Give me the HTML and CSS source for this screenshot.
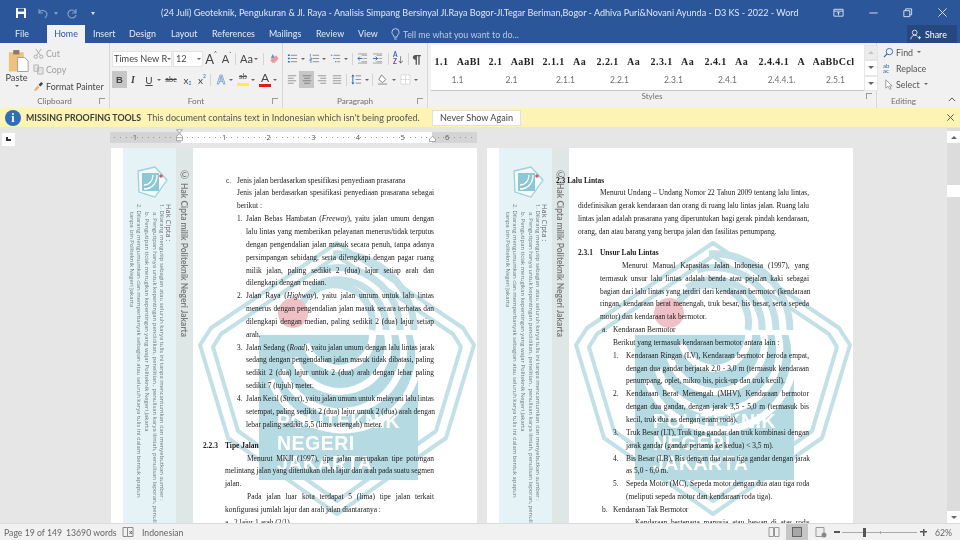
FILE: index.html
```html
<!DOCTYPE html>
<html lang="en">
<head>
<meta charset="utf-8">
<title>Word</title>
<link rel="stylesheet" href="styles.css">
</head>
<body>
<svg class="defs" aria-hidden="true">
  <defs>
    <clipPath id="rectclip"><rect x="148" y="187" width="159" height="145"/></clipPath>
    <symbol id="wm" viewBox="0 0 366 375">
      <g fill="none" stroke="#c2e0e6" stroke-linejoin="round">
        <path stroke-width="4" d="M226 95 L352 180 L363 197 L335 290 L226 366 L117 290 L89 197 L100 180 Z"/>
        <path stroke-width="4" d="M226 108 L342 186 L350 199 L325 283 L226 353 L127 283 L102 199 L110 186 Z"/>
        <g stroke-width="7">
          <path d="M200 140 A48 48 0 0 1 275 182"/>
          <path d="M210 122 A62 62 0 0 1 289 182"/>
          <path d="M222 106 A76 76 0 0 1 303 182"/>
          <path d="M186 168 A34 34 0 0 1 261 182"/>
        </g>
      </g>
      <rect x="148" y="187" width="159" height="145" fill="#b5dae2"/>
      <g clip-path="url(#rectclip)" fill="none" stroke="#fff" stroke-width="7">
        <path d="M261 180 A34 34 0 0 1 195 196"/>
        <path d="M275 180 A48 48 0 0 1 183 210"/>
        <path d="M289 180 A62 62 0 0 1 171 222"/>
        <path d="M303 180 A76 76 0 0 1 160 232"/>
      </g>
      <circle cx="182" cy="165" r="15" fill="#efc1c6"/>
      <text class="wm-t" x="166" y="280">POLITEKNIK</text>
      <text class="wm-t" x="166" y="302">NEGERI</text>
      <text class="wm-t" x="166" y="322">JAKARTA</text>
    </symbol>
    <symbol id="lines-l" viewBox="0 0 12 12"><path d="M1 1.5H11M1 4.5H8M1 7.5H11M1 10.5H8" stroke="#8a8a8a" fill="none"/></symbol>
    <symbol id="lines-c" viewBox="0 0 12 12"><path d="M1 1.5H11M2.500 4.500H9.500M1 7.500H11M2.500 10.500H9.500" stroke="#777" fill="none"/></symbol>
    <symbol id="lines-r" viewBox="0 0 12 12"><path d="M1 1.5H11M4 4.500H11M1 7.500H11M4 10.500H11" stroke="#8a8a8a" fill="none"/></symbol>
    <symbol id="lines-j" viewBox="0 0 12 12"><path d="M1 1.5H11M1 4.500H11M1 7.500H11M1 10.500H11" stroke="#8a8a8a" fill="none"/></symbol>
  </defs>
</svg>

<div class="app">
  <header class="titlebar">
    <div class="qat">
      <svg class="qi" viewBox="0 0 12 12"><path d="M1 1H10L11 2V11H1Z" fill="#fff"/><rect x="3" y="1.500" width="6" height="3" fill="#2b579a"/><rect x="3" y="7" width="6" height="4" fill="#2b579a"/></svg>
      <svg class="qi dim" viewBox="0 0 12 12"><path d="M2 2V6H6M2 6C4 2 9 3 10 7C10 9 9 10 8 11" fill="none" stroke="#7f9bc8" stroke-width="1.200"/></svg>
      <span class="qcaret dimc"></span>
      <svg class="qi dim" viewBox="0 0 12 12"><path d="M10 2V6H6M10 6C8 2 3 2 2 6C1.500 9 4 11 6 11C8 11 9.500 10 10 8" fill="none" stroke="#7f9bc8" stroke-width="1.200"/></svg>
      <span class="qcaret"></span>
    </div>
    <div class="doc-title">(24 Juli) Geoteknik, Pengukuran &amp; Jl. Raya - Analisis Simpang Bersinyal Jl.Raya Bogor-Jl.Tegar Beriman,Bogor - Adhiva Puri&amp;Novani Ayunda - D3 KS - 2022 - Word</div>
    <div class="winbtns">
      <svg class="wi" viewBox="0 0 12 12"><path d="M1 2.500H11V10H1ZM1 4.500H11M6 5.500V9M4.500 7L6 5.500 7.500 7" fill="none" stroke="#dbe4f2"/></svg>
      <svg class="wi" viewBox="0 0 12 12"><path d="M1.500 6.500H10.500" stroke="#dbe4f2"/></svg>
      <svg class="wi" viewBox="0 0 12 12"><path d="M2 4H8.500V10.500H2ZM4 4V2H10.500V8.500H8.500" fill="none" stroke="#dbe4f2"/></svg>
      <svg class="wi" viewBox="0 0 12 12"><path d="M1.500 1.500L10.500 10.500M10.500 1.500L1.500 10.500" stroke="#dbe4f2"/></svg>
    </div>
  </header>

  <nav class="tabs">
    <span class="tab t-file">File</span>
    <span class="tab t-home">Home</span>
    <span class="tab t-insert">Insert</span>
    <span class="tab t-design">Design</span>
    <span class="tab t-layout">Layout</span>
    <span class="tab t-refs">References</span>
    <span class="tab t-mail">Mailings</span>
    <span class="tab t-review">Review</span>
    <span class="tab t-view">View</span>
    <svg class="bulb" viewBox="0 0 10 14"><path d="M3.500 10C3.500 8 1 7 1 4.500A4 4 0 0 1 9 4.500C9 7 6.500 8 6.500 10ZM3.500 12H6.500" fill="none" stroke="#c8d5ea"/></svg>
    <span class="tell">Tell me what you want to do...</span>
    <span class="share">
      <svg class="share-i" viewBox="0 0 14 14"><circle cx="6" cy="4.500" r="3" fill="none" stroke="#fff"/><path d="M1 13C1.500 9.500 3.500 8 6 8C7.500 8 8.500 8.500 9.500 9.500M10 11H14M12 9V13" fill="none" stroke="#fff"/></svg>
      Share
    </span>
  </nav>

  <section class="ribbon">
    <div class="grp g-clip">
      <div class="grp-body clip-body">
        <div class="paste">
          <svg class="paste-i" viewBox="0 0 24 26"><rect x="1" y="3" width="17" height="22" fill="#eec17e"/><rect x="6" y="0.500" width="7" height="5" fill="#8a7a66"/><path d="M11 9H19L23 13V25H11Z" fill="#fff" stroke="#999"/></svg>
          <span class="paste-l">Paste</span>
          <span class="caret c-paste"></span>
        </div>
        <div class="clip-list">
          <div class="clip-row off">
            <svg class="ci" viewBox="0 0 12 12"><path d="M3 1L8 8M9 1L4 8" stroke="#a8a8a8" fill="none"/><circle cx="3" cy="9.500" r="1.800" fill="none" stroke="#a8a8a8"/><circle cx="9" cy="9.500" r="1.800" fill="none" stroke="#a8a8a8"/></svg>Cut</div>
          <div class="clip-row off">
            <svg class="ci" viewBox="0 0 12 12"><path d="M1 1H6V8H1ZM5 4H11V11H5Z" fill="#e4e4e4" stroke="#b5b5b5"/></svg>Copy</div>
          <div class="clip-row">
            <svg class="ci" viewBox="0 0 12 12"><path d="M1 10L5 5L7 7L3 11Z" fill="#e5b35f"/><path d="M6 4L9 1L11 3L8 6Z" fill="#444"/></svg>Format Painter</div>
        </div>
      </div>
      <div class="grp-label">Clipboard<span class="launch"></span></div>
    </div>

    <div class="grp g-font">
      <div class="grp-body rows">
        <div class="row">
          <span class="sel s-font">Times New R<span class="caret"></span></span>
          <span class="sel s-size ml1">12<span class="caret"></span></span>
          <span class="gl g-a1 ml3">A<sup>^</sup></span>
          <span class="gl g-a2 ml6">A<sup>ˇ</sup></span>
          <span class="sep ml4"></span>
          <span class="gl g-aa ml4">Aa</span><span class="caret ml1"></span>
          <span class="sep ml5"></span>
          <svg class="ti ml4" viewBox="0 0 12 12"><path d="M5 1L3 6H8Z" fill="#6d8fc4"/><path d="M5 6L9 2.500L11.500 6L7.500 10.500H4.500L2.500 8Z" fill="#e89aa4"/></svg>
        </div>
        <div class="row">
          <span class="gl g-b">B</span>
          <span class="gl g-i">I</span>
          <span class="gl g-u ml5">U</span><span class="caret ml3"></span>
          <span class="gl g-abc ml4">abc</span>
          <span class="gl g-x ml6">x<sub>2</sub></span>
          <span class="gl g-x ml5">x<sup>2</sup></span>
          <span class="sep ml3"></span>
          <span class="gl g-ao ml5">A</span><span class="caret ml3"></span>
          <span class="hl ml4"><span class="hl-t">ab</span><span class="hl-y"></span></span><span class="caret ml2"></span>
          <span class="fc ml4"><span class="fc-t">A</span><span class="fc-r"></span></span><span class="caret ml2"></span>
        </div>
      </div>
      <div class="grp-label">Font<span class="launch"></span></div>
    </div>

    <div class="grp g-para">
      <div class="grp-body rows">
        <div class="row">
          <svg class="ti" viewBox="0 0 12 12"><path d="M4 2.500H11M4 6H11M4 9.500H11" stroke="#8a8a8a"/><path d="M1 2.500H3M1 6H3M1 9.500H3" stroke="#2b6cb0" stroke-width="1.500"/></svg><span class="caret ml3"></span>
          <svg class="ti ml4" viewBox="0 0 12 12"><path d="M4 2.500H11M4 6H11M4 9.500H11" stroke="#8a8a8a"/><path d="M1.500 1V4M1 5.500H3V7H1V8.500H3M1 10H3" stroke="#2b6cb0" stroke-width=".7" fill="none"/></svg><span class="caret ml2"></span>
          <svg class="ti ml4" viewBox="0 0 12 12"><path d="M4 2.500H11M6 6H11M8 9.500H11" stroke="#8a8a8a"/><path d="M1 2.500H2.500M3.500 6H5M5.500 9.500H7" stroke="#2b6cb0"/></svg><span class="caret ml3"></span>
          <span class="sep ml4"></span>
          <svg class="ti ml4" viewBox="0 0 12 12"><path d="M5 2.500H11M7 6H11M5 9.500H11M1 1H11M1 11H11" stroke="#8a8a8a" stroke-width=".8"/><path d="M1 6H6M1 6L3 4M1 6L3 8" stroke="#2b6cb0" fill="none"/></svg>
          <svg class="ti ml4" viewBox="0 0 12 12"><path d="M5 2.500H11M7 6H11M5 9.500H11M1 1H11M1 11H11" stroke="#8a8a8a" stroke-width=".8"/><path d="M1 6H6M6 6L4 4M6 6L4 8" stroke="#2b6cb0" fill="none"/></svg>
          <span class="sep ml5"></span>
          <span class="sort ml4"><span class="az"><b class="az-a">A</b><b class="az-z">Z</b></span><span class="az-arrow">↓</span></span>
          <span class="sep ml5"></span>
          <span class="gl g-pil ml4">¶</span>
        </div>
        <div class="row">
          <svg class="ali"><use href="#lines-l"/></svg>
          <span class="ali-on ml2"><svg class="ali"><use href="#lines-c"/></svg></span>
          <svg class="ali ml3"><use href="#lines-r"/></svg>
          <svg class="ali ml5"><use href="#lines-j"/></svg>
          <span class="sep ml4"></span>
          <svg class="ti ml4" viewBox="0 0 12 12"><path d="M5 2H11M5 6H11M5 10H11" stroke="#8a8a8a"/><path d="M2 1V11M1 3L2 1L3 3M1 9L2 11L3 9" stroke="#2b6cb0" fill="none"/></svg><span class="caret ml3"></span>
          <span class="sep ml3"></span>
          <svg class="ti ml4" viewBox="0 0 12 12"><path d="M5 1L9.500 6L6 9.500L2 6Z" fill="#fff" stroke="#777"/><path d="M1 11H11" stroke="#aaa" stroke-width="1.500"/></svg><span class="caret ml4"></span>
          <svg class="ti ml4" viewBox="0 0 12 12"><path d="M1 1H11V11H1ZM6 1V11M1 6H11" fill="#fff" stroke="#bbb" stroke-dasharray="1 1"/></svg><span class="caret ml3"></span>
        </div>
      </div>
      <div class="grp-label">Paragraph<span class="launch"></span></div>
    </div>

    <div class="grp g-styles">
      <div class="grp-body styles-body">
        <div class="gallery">
          <div class="style"><div class="s-prev">1.1&nbsp; AaBl</div><div class="s-name">1.1</div></div>
          <div class="style"><div class="s-prev">2.1&nbsp; AaBl</div><div class="s-name">2.1</div></div>
          <div class="style"><div class="s-prev">2.1.1&nbsp; Aa</div><div class="s-name">2.1.1</div></div>
          <div class="style"><div class="s-prev">2.2.1&nbsp; Aa</div><div class="s-name">2.2.1</div></div>
          <div class="style"><div class="s-prev">2.3.1&nbsp; Aa</div><div class="s-name">2.3.1</div></div>
          <div class="style"><div class="s-prev">2.4.1&nbsp; Aa</div><div class="s-name">2.4.1</div></div>
          <div class="style"><div class="s-prev">2.4.4.1&nbsp; A</div><div class="s-name">2.4.4.1.</div></div>
          <div class="style"><div class="s-prev">AaBbCcl</div><div class="s-name">2.5.1</div></div>
        </div>
        <div class="gal-scroll">
          <span class="gs"><i class="up off"></i></span>
          <span class="gs"><i class="down"></i></span>
          <span class="gs"><i class="down"></i></span>
        </div>
      </div>
      <div class="grp-label">Styles<span class="launch"></span></div>
    </div>

    <div class="grp g-edit">
      <div class="grp-body edit-list">
        <div class="edit-row"><svg class="ci" viewBox="0 0 12 12"><circle cx="7" cy="5" r="3.500" fill="none" stroke="#2b6cb0"/><path d="M4.500 7.500L1 11" stroke="#2b6cb0" stroke-width="1.300"/></svg>Find<span class="caret"></span></div>
        <div class="edit-row"><span class="abac">ab<br>ac</span>Replace</div>
        <div class="edit-row"><svg class="ci" viewBox="0 0 12 12"><path d="M3 1V10L5.500 8L7.500 11.500L9 10.500L7 7.500H10Z" fill="#fff" stroke="#999"/></svg>Select<span class="caret"></span></div>
      </div>
      <div class="grp-label">Editing</div>
    </div>
    <div class="collapse"><svg class="chev" viewBox="0 0 10 6"><path d="M1 5L5 1L9 5" fill="none" stroke="#555" stroke-width="1.200"/></svg></div>
  </section>

  <div class="msgbar">
    <span class="info">i</span>
    <strong class="msg-h">MISSING PROOFING TOOLS</strong>
    <span class="msg-t">This document contains text in Indonesian which isn't being proofed.</span>
    <span class="msg-btn">Never Show Again</span>
    <svg class="msg-x" viewBox="0 0 10 10"><path d="M1.500 1.500L8.500 8.500M8.500 1.500L1.500 8.500" stroke="#555" stroke-width="1.100"/></svg>
  </div>

  <main class="workspace">
    <div class="canvas">
      <div class="ruler-row">
        <span class="tabstop"><i></i></span>
        <div class="ruler">
          <span>1</span><span class="r0"></span><span>1</span><span>2</span><span>3</span><span>4</span><span>5</span><span>6</span>
          <svg class="mk mk-l" viewBox="0 0 8 14"><path d="M.5.500H7.500L4 4ZM4 5L7.500 8V13H.5V8ZM.5 9.500H7.500" fill="#fff" stroke="#999"/></svg>
          <svg class="mk mk-r" viewBox="0 0 8 7"><path d="M4 .5L7.500 3.500V6.500H.5V3.500Z" fill="#fff" stroke="#999"/></svg>
        </div>
      </div>
      <div class="pages">
        <article class="page">
          <svg class="wm"><use href="#wm"/></svg>
          <aside class="band">
            <svg class="logo" viewBox="0 0 32 32"><path d="M2 5L19 1L31 14L19 31L3 26Z" fill="#f2fafb" stroke="#9fd0da" stroke-width="1.300"/><rect x="6" y="7" width="17" height="18" fill="#8cc8d3"/><path d="M8 23C16 23 21 17 21 9M8 19C13 19 17 15 17 9" fill="none" stroke="#fff" stroke-width="1.300"/><circle cx="25" cy="10" r="1.800" fill="#dd5566"/></svg>
            <div class="notes">
              <div class="n n-h">Hak Cipta :</div>
              <div class="n">1. Dilarang mengutip sebagian atau seluruh karya tulis ini tanpa mencantumkan dan menyebutkan sumber :</div>
              <div class="n n-s">a. Pengutipan hanya untuk kepentingan pendidikan, penelitian , penulisan karya ilmiah, penulisan laporan, penulisan kritik atau tinjauan suatu masalah.</div>
              <div class="n n-s n-g">b. Pengutipan tidak merugikan kepentingan yang wajar Politeknik Negeri Jakarta</div>
              <div class="n n-g">2. Dilarang mengumumkan dan memperbanyak sebagian atau seluruh karya tulis ini dalam bentuk apapun</div>
              <div class="n n-s">tanpa izin Politeknik Negeri Jakarta</div>
            </div>
          </aside>
          <aside class="band2"><span class="copy"><span class="cc">©</span> Hak Cipta milik Politeknik Negeri Jakarta</span></aside>
          <div class="doc doc-l">
            <div class="ln item i1"><span class="lbl w11">c.</span><span class="tx">Jenis jalan berdasarkan spesifikasi penyediaan prasarana</span></div>
            <div class="ln j p12">Jenis jalan berdasarkan spesifikasi penyediaan prasarana sebagai</div>
            <div class="ln p12">berikut :</div>
            <div class="ln j item p12"><span class="lbl w9">1.</span><span class="tx">Jalan Bebas Hambatan (<em>Freeway</em>), yaitu jalan umum dengan</span></div>
            <div class="ln j p21">lalu lintas yang memberikan pelayanan menerus/tidak terputus</div>
            <div class="ln j p21">dengan pengendalian jalan masuk secara penuh, tanpa adanya</div>
            <div class="ln j p21">persimpangan sebidang, serta dilengkapi dengan pagar ruang</div>
            <div class="ln j p21">milik jalan, paling sedikit 2 (dua) lajur setiap arah dan</div>
            <div class="ln p21">dilengkapi dengan median.</div>
            <div class="ln j item p12"><span class="lbl w9">2.</span><span class="tx">Jalan Raya (<em>Highway</em>), yaitu jalan umum untuk lalu lintas</span></div>
            <div class="ln j p21">menerus dengan pengendalian jalan masuk secara terbatas dan</div>
            <div class="ln j p21">dilengkapi dengan median, paling sedikit 2 (dua) lajur setiap</div>
            <div class="ln p21">arah.</div>
            <div class="ln j item p12"><span class="lbl w9">3.</span><span class="tx">Jalan Sedang (<em>Road</em>), yaitu jalan umum dengan lalu lintas jarak</span></div>
            <div class="ln j p21">sedang dengan pengendalian jalan masuk tidak dibatasi, paling</div>
            <div class="ln j p21">sedikit 2 (dua) lajur untuk 2 (dua) arah dengan lebar paling</div>
            <div class="ln p21">sedikit 7 (tujuh) meter.</div>
            <div class="ln j item p12 tight"><span class="lbl w9">4.</span><span class="tx">Jalan Kecil (<em>Street</em>), yaitu jalan umum untuk melayani lalu lintas</span></div>
            <div class="ln j p21">setempat, paling sedikit 2 (dua) lajur untuk 2 (dua) arah dengan</div>
            <div class="ln p21">lebar paling sedikit 5,5 (lima setengah) meter.</div>
            <div class="ln item hd hang"><span class="lbl w22">2.2.3</span><span class="tx">Tipe Jalan</span></div>
            <div class="ln j p22">Menurut MKJI (1997), tipe jalan merupakan tipe potongan</div>
            <div class="ln j tight">melintang jalan yang ditentukan oleh lajur dan arah pada suatu segmen</div>
            <div class="ln">jalan.</div>
            <div class="ln j p22">Pada jalan luar kota terdapat 5 (lima) tipe jalan terkait</div>
            <div class="ln">konfigurasi jumlah lajur dan arah jalan diantaranya :</div>
            <div class="ln item"><span class="lbl w9">a.</span><span class="tx">2 lajur 1 arah (2/1)</span></div>
          </div>
        </article>

        <article class="page">
          <svg class="wm"><use href="#wm"/></svg>
          <aside class="band">
            <svg class="logo" viewBox="0 0 32 32"><path d="M2 5L19 1L31 14L19 31L3 26Z" fill="#f2fafb" stroke="#9fd0da" stroke-width="1.300"/><rect x="6" y="7" width="17" height="18" fill="#8cc8d3"/><path d="M8 23C16 23 21 17 21 9M8 19C13 19 17 15 17 9" fill="none" stroke="#fff" stroke-width="1.300"/><circle cx="25" cy="10" r="1.800" fill="#dd5566"/></svg>
            <div class="notes">
              <div class="n n-h">Hak Cipta :</div>
              <div class="n">1. Dilarang mengutip sebagian atau seluruh karya tulis ini tanpa mencantumkan dan menyebutkan sumber :</div>
              <div class="n n-s">a. Pengutipan hanya untuk kepentingan pendidikan, penelitian , penulisan karya ilmiah, penulisan laporan, penulisan kritik atau tinjauan suatu masalah.</div>
              <div class="n n-s n-g">b. Pengutipan tidak merugikan kepentingan yang wajar Politeknik Negeri Jakarta</div>
              <div class="n n-g">2. Dilarang mengumumkan dan memperbanyak sebagian atau seluruh karya tulis ini dalam bentuk apapun</div>
              <div class="n n-s">tanpa izin Politeknik Negeri Jakarta</div>
            </div>
          </aside>
          <aside class="band2"><span class="copy"><span class="cc">©</span> Hak Cipta milik Politeknik Negeri Jakarta</span></aside>
          <div class="doc doc-r">
            <div class="ln hd hang">2.3 Lalu Lintas</div>
            <div class="ln j p22">Menurut Undang – Undang Nomor 22 Tahun 2009 tentang lalu lintas,</div>
            <div class="ln j">didefinisikan gerak kendaraan dan orang di ruang lalu lintas jalan. Ruang lalu</div>
            <div class="ln j">lintas jalan adalah prasarana yang diperuntukan bagi gerak pindah kendaraan,</div>
            <div class="ln">orang, dan atau barang yang berupa jalan dan fasilitas penumpang.</div>
            <div class="ln item hd"><span class="lbl w22">2.3.1</span><span class="tx">Unsur Lalu Lintas</span></div>
            <div class="ln j p22 in22">Menurut Manual Kapasitas Jalan Indonesia (1997), yang</div>
            <div class="ln j p22">termasuk unsur lalu lintas adalah benda atau pejalan kaki sebagai</div>
            <div class="ln j p22">bagian dari lalu lintas yang terdiri dari kendaraan bermotor (kendaraan</div>
            <div class="ln j p22">ringan, kendaraan berat menengah, truk besar, bis besar, serta sepeda</div>
            <div class="ln p22">motor) dan kendaraan tak bermotor.</div>
            <div class="ln item p24"><span class="lbl w11">a.</span><span class="tx">Kendaraan Bermotor</span></div>
            <div class="ln p35">Berikut yang termasuk kendaraan bermotor antara lain :</div>
            <div class="ln j item p35"><span class="lbl w13">1.</span><span class="tx">Kendaraan Ringan (LV), Kendaraan bermotor beroda empat,</span></div>
            <div class="ln j p48">dengan dua gandar berjarak 2,0 - 3,0 m (termasuk kendaraan</div>
            <div class="ln p48">penumpang, oplet, mikro bis, pick-up dan truk kecil).</div>
            <div class="ln j item p35"><span class="lbl w13">2.</span><span class="tx">Kendaraan Berat Menengah (MHV), Kendaraan bermotor</span></div>
            <div class="ln j p48">dengan dua gandar, dengan jarak 3,5 - 5,0 m (termasuk bis</div>
            <div class="ln p48">kecil, truk dua as dengan enam roda).</div>
            <div class="ln j item p35 tight"><span class="lbl w13">3.</span><span class="tx">Truk Besar (LT), Truk tiga gandar dan truk kombinasi dengan</span></div>
            <div class="ln p48">jarak gandar (gandar pertama ke kedua) &lt; 3,5 m).</div>
            <div class="ln j item p35"><span class="lbl w13">4.</span><span class="tx">Bis Besar (LB), Bis dengan dua atau tiga gandar dengan jarak</span></div>
            <div class="ln p48">as 5,0 - 6,0 m.</div>
            <div class="ln j item p35"><span class="lbl w13">5.</span><span class="tx">Sepeda Motor (MC), Sepeda motor dengan dua atau tiga roda</span></div>
            <div class="ln p48">(meliputi sepeda motor dan kendaraan roda tiga).</div>
            <div class="ln item p24"><span class="lbl w11">b.</span><span class="tx">Kendaraan Tak Bermotor</span></div>
            <div class="ln j p57">Kendaraan bertenaga manusia atau hewan di atas roda</div>
          </div>
        </article>
      </div>
    </div>
    <div class="vscroll">
      <span class="vbtn"><i class="up"></i></span>
      <span class="thumb"></span>
      <span class="vbtn vbtn-b"><i class="down"></i></span>
    </div>
  </main>

  <footer class="status">
    <span class="st-t st-page">Page 19 of 149</span>
    <span class="st-t st-words">13690 words</span>
    <svg class="st-book" viewBox="0 0 12 12"><path d="M1 1.500H5.500V10.500H1ZM5.500 1.500H11V10.500H5.500" fill="none" stroke="#8a8a8a"/><path d="M7.500 5L10 8M10 5L7.500 8" stroke="#666"/></svg>
    <span class="st-t">Indonesian</span>
    <span class="st-views">
      <svg class="vw" viewBox="0 0 12 12"><path d="M1 1.500H5.500V10.500H1ZM6.500 1.500H11V10.500H6.500Z" fill="none" stroke="#999"/></svg>
      <span class="vw-on"><svg class="vw" viewBox="0 0 12 12"><rect x="1.500" y="1.500" width="9" height="9" fill="#a8a8a8" stroke="#666"/></svg></span>
      <svg class="vw" viewBox="0 0 12 12"><path d="M1 1.500H9V10.500H1Z" fill="#eee" stroke="#999"/><circle cx="9" cy="9" r="2.500" fill="#888"/></svg>
    </span>
    <span class="zoom-m"></span>
    <span class="slider"><span class="sl-thumb"></span><span class="sl-tick"></span></span>
    <span class="zoom-p"></span>
    <span class="st-t st-pct">62%</span>
  </footer>
</div>
</body>
</html>
```

FILE: styles.css
```css
* { box-sizing: border-box; }
html, body { margin: 0; padding: 0; }
body { width: 960px; height: 540px; overflow: hidden; background: #e6e6e6; font-family: "Lato", "Open Sans", sans-serif; }
.defs { position: absolute; width: 0; height: 0; }
.app { width: 960px; height: 540px; display: flex; flex-direction: column; filter: blur(.35px); }

.ml1 { margin-left: 1px; }
.ml2 { margin-left: 2px; }
.ml3 { margin-left: 3px; }
.ml4 { margin-left: 4px; }
.ml5 { margin-left: 5px; }
.ml6 { margin-left: 6px; }

/* title bar */
.titlebar { height: 25px; background: #2b579a; display: flex; align-items: center; flex: none; }
.qat { width: 161px; padding-left: 15px; display: flex; align-items: center; flex: none; }
.qi { width: 12px; height: 12px; margin-right: 10px; }
.qi.dim { margin-right: 3px; }
.qcaret { width: 0; height: 0; border: 2.5px solid transparent; border-top: 3px solid #dbe4f2; margin: 3px 0 0 10px; }
.qcaret.dimc { border-top-color: #7f9bc8; margin: 3px 8px 0 2px; }
.doc-title { width: 640px; font-size: 9.050px; color: #dfe7f4; white-space: nowrap; flex: none; }
.winbtns { display: flex; margin-left: 32px; width: 127px; justify-content: space-between; padding-right: 12px; }
.wi { width: 11px; height: 11px; }

/* tabs */
.tabs { height: 18px; background: #2b579a; display: flex; align-items: center; flex: none; font-size: 8.900px; color: #e3eaf6; }
.tab { line-height: 18px; white-space: nowrap; }
.t-file { margin-left: 15px; width: 32px; }
.t-home { width: 38px; text-align: center; background: #f1f1f1; color: #2b579a; }
.t-insert { margin-left: 8px; width: 36px; }
.t-design { width: 42px; }
.t-layout { width: 41px; }
.t-refs { width: 57px; }
.t-mail { width: 47px; }
.t-review { width: 42px; }
.t-view { width: 33px; }
.bulb { width: 9px; height: 13px; flex: none; }
.tell { margin-left: 3px; color: #b9c9e3; white-space: nowrap; width: 504px; flex: none; }
.share { width: 50px; height: 18px; background: #25497f; display: flex; align-items: center; color: #fff; gap: 4px; padding-left: 3px; flex: none; }
.share-i { width: 11px; height: 13px; }

/* ribbon */
.ribbon { height: 65px; background: #f1f1f1; display: flex; flex: none; color: #444; font-size: 8.900px; }
.grp { display: flex; flex-direction: column; height: 65px; border-right: 1px solid #d8d8d8; flex: none; }
.grp-body { flex: 1; min-height: 0; }
.grp-label { height: 11px; text-align: center; line-height: 11px; font-size: 8.200px; color: #707070; position: relative; margin-bottom: 1px; flex: none; }
.launch { position: absolute; right: 4px; top: 2px; width: 6px; height: 6px; border: 1px solid #999; border-width: 1px 0 0 1px; }
.g-clip { width: 110px; }
.g-font { width: 173px; }
.g-para { width: 145px; }
.g-styles { width: 449px; }
.g-edit { width: 53px; border-right: 0; }
.collapse { flex: 1; display: flex; align-items: flex-end; justify-content: center; padding: 0 0 4px 14px; }
.chev { width: 8px; height: 5px; margin-bottom: 2px; }

.caret { display: inline-block; width: 0; height: 0; border: 2px solid transparent; border-top: 2.500px solid #666; margin-top: 2px; flex: none; }

.clip-body { display: flex; padding-top: 4px; }
.paste { width: 33px; display: flex; flex-direction: column; align-items: center; flex: none; }
.paste-i { width: 21px; height: 26px; margin: 1px 0 0 3px; flex: none; }
.paste-l { line-height: 12px; margin-top: -2px; color: #444; font-size: 9.200px; }
.c-paste { margin-top: 1px; }
.clip-list { display: flex; flex-direction: column; margin-top: -2px; }
.clip-row { height: 16.500px; display: flex; align-items: center; color: #444; white-space: nowrap; gap: 2px; flex: none; }
.clip-row.off { color: #a0a0a0; }
.ci { width: 11px; height: 11px; flex: none; }

.rows { display: flex; flex-direction: column; padding: 7px 0 0 2px; }
.row { height: 17px; display: flex; align-items: center; margin-bottom: 4px; flex: none; }
.sel { background: #fff; border: 1px solid #e3e3e3; height: 16px; display: flex; align-items: center; padding: 0 1px; font: 9.200px "Lato", sans-serif; color: #444; justify-content: space-between; white-space: nowrap; flex: none; }
.s-font { width: 60px; }
.s-size { width: 30px; padding-left: 2px; }
.gl { display: inline-flex; align-items: center; justify-content: center; color: #444; flex: none; }
.g-a1 { font-size: 13px; width: 10px; }
.g-a2 { font-size: 11px; width: 9px; }
.gl sup { font-size: 5px; align-self: flex-start; line-height: 5px; }
.sep { width: 1px; height: 12px; background: #d3d3d3; flex: none; }
.g-aa { font-size: 11px; width: 13px; }
.ti { width: 11px; height: 11px; flex: none; }
.ali { width: 10px; height: 11px; flex: none; }
.g-b { width: 15px; height: 17px; background: #c6c6c6; font: bold 9.500px "Liberation Sans", sans-serif; }
.g-i { width: 12px; font: italic bold 10px "Liberation Serif", serif; }
.g-u { width: 10px; font-size: 10px; text-decoration: underline; }
.g-abc { width: 12px; font-size: 7.500px; text-decoration: line-through; }
.g-x { width: 9px; font-size: 10px; }
.g-x + .g-x { width: 10px; }
.g-x sub { font-size: 5px; color: #2b6cb0; line-height: 5px; align-self: flex-end; }
.g-x sup { color: #2b6cb0; }
.g-ao { width: 10px; font: bold 12px "Liberation Sans", sans-serif; color: #cfe0f5; -webkit-text-stroke: .5px #4a86c8; }
.hl { width: 12px; height: 16px; display: flex; flex-direction: column; align-items: center; flex: none; }
.hl-t { font-size: 7.500px; line-height: 10px; text-decoration: line-through; color: #555; }
.hl-y { width: 12px; height: 3px; background: #ffef3a; margin-top: 1px; }
.fc { width: 12px; height: 16px; display: flex; flex-direction: column; align-items: center; flex: none; }
.fc-t { font-size: 12px; line-height: 12px; color: #444; }
.fc-r { width: 12px; height: 3px; background: #d81e1e; }

.g-para .rows { padding-left: 4px; }
.sort { display: inline-flex; width: 10px; height: 15px; align-items: center; flex: none; }
.az { display: flex; flex-direction: column; font-size: 6.500px; line-height: 6.500px; }
.az-a { color: #2b6cb0; }
.az-z { color: #7d3fa0; }
.az-arrow { font-size: 8px; color: #555; }
.g-pil { font-size: 12px; width: 8px; font-weight: bold; color: #555; }
.ali-on { width: 15px; height: 17px; background: #c6c6c6; display: flex; align-items: center; justify-content: center; flex: none; }

.styles-body { display: flex; padding: 2px 0 0 2.500px; height: 48px; flex: none; }
.gallery { width: 433px; height: 46px; background: #fff; border-bottom: 1px solid #c6c6c6; display: flex; flex: none; }
.style { width: 54px; padding-left: 4px; overflow: hidden; flex: none; }
.s-prev { font: bold 10px/14px "Liberation Serif", serif; letter-spacing: .45px; word-spacing: 1.500px; color: #222; margin-top: 10px; white-space: nowrap; overflow: hidden; width: 46px; }
.s-name { font-size: 8.500px; color: #6e6e6e; text-align: center; margin: 5px 0 0 -4px; line-height: 12px; }
.gal-scroll { width: 14px; height: 46px; display: flex; flex-direction: column; flex: none; }
.gs { height: 15.300px; background: #fff; border: 1px solid #e6e6e6; display: flex; align-items: center; justify-content: center; }
.gs:first-child { background: #ececec; }
i.up { width: 0; height: 0; border: 3px solid transparent; border-bottom: 3px solid #666; border-top: 0; display: block; }
i.up.off { border-bottom-color: #c6c6c6; }
i.down { width: 0; height: 0; border: 3px solid transparent; border-top: 3px solid #666; border-bottom: 0; display: block; }

.edit-list { padding: 1px 0 0 6px; }
.edit-row { height: 16px; display: flex; align-items: center; gap: 2px; color: #555; white-space: nowrap; }
.edit-row .caret { margin-left: 2px; }
.abac { width: 11px; font-size: 6px; line-height: 5.500px; color: #2b6cb0; flex: none; }

/* message bar */
.msgbar { height: 20px; background: #fcf3b4; border-bottom: 1px solid #efe9c0; display: flex; align-items: center; padding-left: 5px; flex: none; font-size: 9.100px; color: #444; white-space: nowrap; }
.info { width: 16px; height: 16px; border-radius: 50%; background: #2e6fb5; color: #fff; font: bold 12px/16px "Liberation Serif", serif; text-align: center; flex: none; }
.msg-h { font-weight: 700; margin-left: 5px; width: 121px; color: #404040; font-size: 8.800px; flex: none; }
.msg-t { width: 285px; color: #555; flex: none; }
.msg-btn { width: 89px; height: 16px; background: #fff; border: 1px solid #e0e0e0; text-align: center; line-height: 14px; color: #444; flex: none; }
.msg-x { width: 9px; height: 9px; margin-left: 425px; flex: none; }

/* workspace */
.workspace { flex: 1; display: flex; min-height: 0; background: #e6e6e6; }
.canvas { flex: 1; min-width: 0; display: flex; flex-direction: column; overflow: hidden; }
.ruler-row { height: 20px; display: flex; padding-top: 4px; padding-left: 2px; flex: none; }
.tabstop { width: 13px; height: 13px; background: #fff; position: relative; margin-top: 1px; flex: none; }
.tabstop i { position: absolute; left: 4px; top: 4px; width: 5px; height: 4px; border: 1px solid #333; border-width: 0 0 2px 2px; }
.ruler { position: relative; margin-left: 95px; width: 367px; height: 11px; flex: none; display: grid; grid-template-columns: repeat(8, 44.600px); padding-left: 2.700px; font: 7.500px/11px "Open Sans", sans-serif; color: #555;
  background:
    repeating-linear-gradient(90deg, transparent 0 4.500px, #999 4.500px 5.500px, transparent 5.500px 5.570px) 0 5px / 100% 1px no-repeat,
    linear-gradient(90deg, #d4d4d4 0 71px, #fff 71px 322px, #d4d4d4 322px); }
.ruler span { text-align: center; }
.mk { position: absolute; }
.mk-l { left: 66px; top: -3px; width: 7px; height: 13px; }
.mk-r { left: 319px; top: 4px; width: 7px; height: 6px; }
.pages { display: flex; gap: 10px; padding-left: 111px; flex: 1; min-height: 0; overflow: hidden; }
.page { width: 366px; height: 375px; flex: none; background: #fff; padding-left: 12px; display: flex; position: relative; overflow: hidden; }
.wm { position: absolute; left: 0; top: 0; width: 366px; height: 375px; }
.wm-t { font: bold 19.500px "Liberation Sans", sans-serif; fill: #fff; letter-spacing: .5px; }
.band { width: 53px; background: #e6f3f6; flex: none; display: flex; flex-direction: column; position: relative; }
.logo { width: 32px; height: 32px; margin: 18px 0 0 13px; flex: none; }
.notes { writing-mode: vertical-rl; align-self: flex-end; margin-top: 6px; padding-right: 3px; font: 5.900px/6.800px "Open Sans", sans-serif; color: #6d7a7d; white-space: nowrap; height: 330px; }
.n-h { font-size: 7.500px; line-height: 8px; color: #666; }
.n-s { padding-top: 8px; }
.n-g { margin-right: 1.500px; }
.band2 { width: 17px; background: #dfe6e6; flex: none; writing-mode: vertical-rl; padding-top: 20px; line-height: 17px; position: relative; }
.copy { font: 700 8.500px/17px "Lato", sans-serif; color: #777c7d; white-space: nowrap; }
.cc { font-size: 11px; font-weight: 400; }

/* document text */
.doc { position: relative; flex: none; padding-top: 26.600px; font: 7.440px/12.850px "Liberation Serif", serif; color: #1a1a1a; }
.doc-l { width: 284px; padding-left: 32px; padding-right: 43px; }
.doc-r { width: 284px; padding-left: 9px; padding-right: 44px; }
.ln { height: 12.850px; white-space: nowrap; }
.j { text-align: justify; text-align-last: justify; }
.tight { word-spacing: -.5px; }
.item { display: flex; }
.tx { flex: 1; min-width: 0; display: block; }
.lbl { flex: none; display: block; text-align: left; text-align-last: left; }
.w9 { width: 9px; }
.w11 { width: 11px; }
.w13 { width: 13px; }
.w22 { width: 22px; }
.i1 { padding-left: 1px; }
.p12 { padding-left: 12px; }
.p21 { padding-left: 21px; }
.p22 { padding-left: 22px; }
.p24 { padding-left: 24px; }
.p35 { padding-left: 35px; }
.p48 { padding-left: 48px; }
.p57 { padding-left: 57px; }
.in22 { text-indent: 22px; }
.hd { font-weight: bold; margin-top: 8.200px; }
.hang { margin-left: -22px; }
.doc-r .hd.hang { margin-top: 0; }

/* scrollbar */
.vscroll { width: 13px; flex: none; display: flex; flex-direction: column; background: #dcdcdc; padding-top: 3px; }
.vbtn { height: 12px; background: #fff; display: flex; align-items: center; justify-content: center; flex: none; }
.vbtn-b { margin-top: auto; }
.thumb { height: 12px; background: #fff; margin-top: 42px; flex: none; }

/* status bar */
.status { height: 17px; background: #f1f1f1; border-top: 1px solid #dcdcdc; display: flex; align-items: center; padding-left: 4px; flex: none; font-size: 8.700px; color: #666; white-space: nowrap; }
.st-t { color: #666; flex: none; }
.st-page { width: 62px; }
.st-words { width: 56px; }
.st-book { width: 12px; height: 12px; margin-right: 8px; flex: none; }
.st-views { display: flex; align-items: center; margin-left: auto; }
.vw { width: 12px; height: 12px; flex: none; }
.vw-on { width: 22px; height: 16px; background: #c6c6c6; display: flex; align-items: center; justify-content: center; margin: 0 7px 0 6px; flex: none; }
.zoom-m { width: 6px; height: 1.500px; background: #555; margin-left: 7px; flex: none; }
.slider { width: 75px; height: 1px; background: #aaa; margin-left: 2px; position: relative; flex: none; }
.sl-thumb { position: absolute; left: 21px; top: -4px; width: 3px; height: 9px; background: #555; }
.sl-tick { position: absolute; left: 38px; top: -1px; width: 1px; height: 3px; background: #aaa; }
.zoom-p { width: 7px; height: 7px; margin-left: 3px; flex: none; background: linear-gradient(#555,#555) center / 100% 1.500px no-repeat, linear-gradient(#555,#555) center / 1.500px 100% no-repeat; }
.st-pct { margin-left: 8px; margin-right: 8px; }
```
